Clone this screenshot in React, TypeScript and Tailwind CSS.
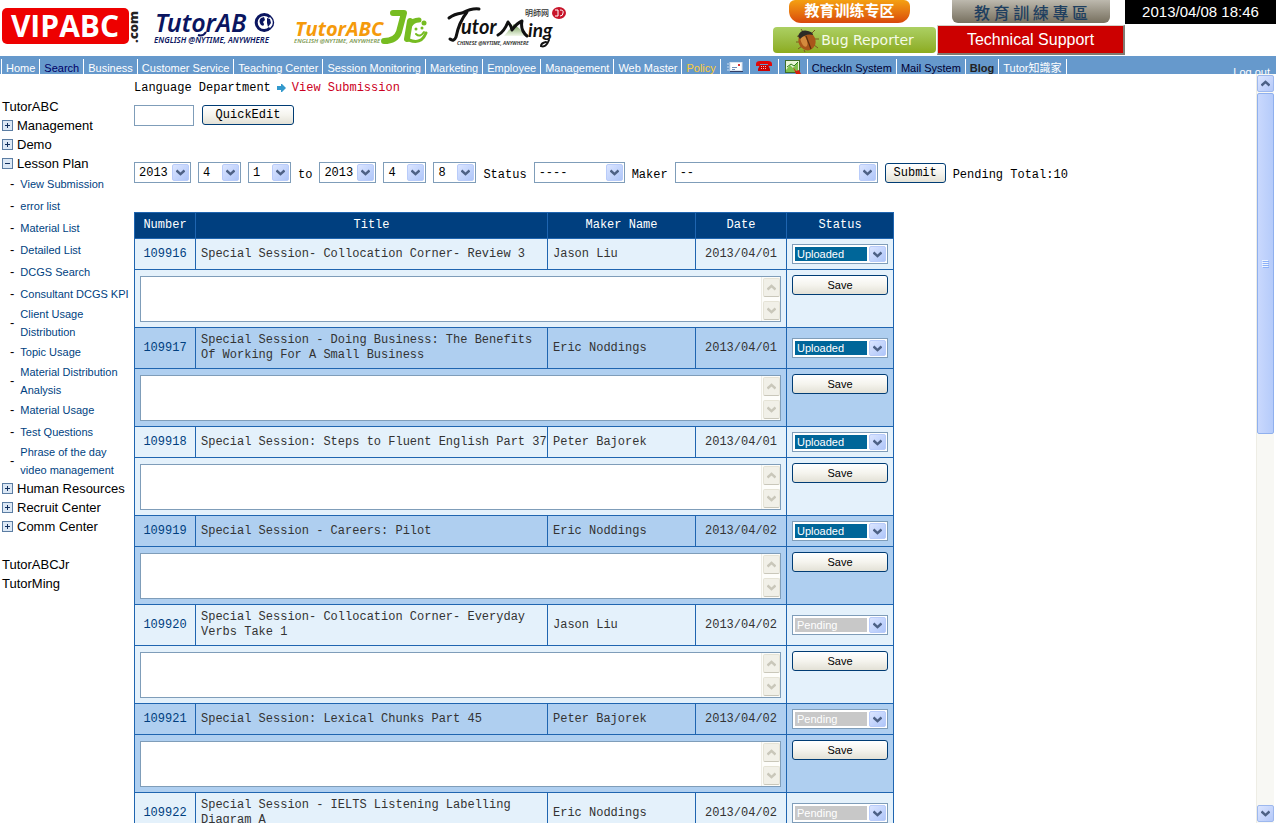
import React from "react";

const mono = "font-['Liberation_Mono','Noto_Sans_CJK_TC',monospace]";

type NavItem = { label: string; tone: string };

const NAV_LEFT: NavItem[] = [
  { label: "Home", tone: "text-white" },
  { label: "Search", tone: "text-[#000066]" },
  { label: "Business", tone: "text-white" },
  { label: "Customer Service", tone: "text-white" },
  { label: "Teaching Center", tone: "text-white" },
  { label: "Session Monitoring", tone: "text-white" },
  { label: "Marketing", tone: "text-white" },
  { label: "Employee", tone: "text-white" },
  { label: "Management", tone: "text-white" },
  { label: "Web Master", tone: "text-white" },
  { label: "Policy", tone: "text-[#ffcc33]" },
];

const NAV_RIGHT: NavItem[] = [
  { label: "CheckIn System", tone: "text-[#000033]" },
  { label: "Mail System", tone: "text-[#000033]" },
  { label: "Blog", tone: "text-[#222222] font-bold" },
  { label: "Tutor知識家", tone: "text-white" },
];

const LESSON_ITEMS = [
  "View Submission",
  "error list",
  "Material List",
  "Detailed List",
  "DCGS Search",
  "Consultant DCGS KPI",
  "Client Usage Distribution",
  "Topic Usage",
  "Material Distribution Analysis",
  "Material Usage",
  "Test Questions",
  "Phrase of the day video management",
];

type Row = { id: number; title: string; maker: string; date: string; status: "Uploaded" | "Pending" };

const ROWS: Row[] = [
  { id: 109916, title: "Special Session- Collocation Corner- Review 3", maker: "Jason Liu", date: "2013/04/01", status: "Uploaded" },
  { id: 109917, title: "Special Session - Doing Business: The Benefits Of Working For A Small Business", maker: "Eric Noddings", date: "2013/04/01", status: "Uploaded" },
  { id: 109918, title: "Special Session: Steps to Fluent English Part 37", maker: "Peter Bajorek", date: "2013/04/01", status: "Uploaded" },
  { id: 109919, title: "Special Session - Careers: Pilot", maker: "Eric Noddings", date: "2013/04/02", status: "Uploaded" },
  { id: 109920, title: "Special Session- Collocation Corner- Everyday Verbs Take 1", maker: "Jason Liu", date: "2013/04/02", status: "Pending" },
  { id: 109921, title: "Special Session: Lexical Chunks Part 45", maker: "Peter Bajorek", date: "2013/04/02", status: "Pending" },
  { id: 109922, title: "Special Session - IELTS Listening Labelling Diagram A", maker: "Eric Noddings", date: "2013/04/02", status: "Pending" },
];

function Chevron({ up = false, color }: { up?: boolean; color: string }) {
  return (
    <svg width="9" height="7" viewBox="0 0 9 7" aria-hidden="true">
      <path d={up ? "M0.5 5.5 L4.5 1.8 L8.5 5.5" : "M0.5 1.5 L4.5 5.2 L8.5 1.5"} fill="none" stroke={color} strokeWidth="2.4" />
    </svg>
  );
}

function DropArrow() {
  return (
    <span className="pointer-events-none absolute inset-y-px right-px flex w-[17px] items-center justify-center rounded-xs border border-[#b9ccfa] bg-linear-to-br from-[#dbe5ff] to-[#afc6f9]">
      <Chevron color="#4d6185" />
    </span>
  );
}

function Drop({ label, options, value, width }: { label: string; options: string[]; value: string; width: string }) {
  return (
    <span className={`relative block h-[21px] border border-[#7f9db9] bg-white ${width}`}>
      <select aria-label={label} defaultValue={value} className="block h-full w-full appearance-none bg-transparent pl-1 pr-5 text-xs leading-4 text-black outline-none">
        {options.map((o) => (
          <option key={o}>{o}</option>
        ))}
      </select>
      <DropArrow />
    </span>
  );
}

function StatusDrop({ status, id }: { status: "Uploaded" | "Pending"; id: number }) {
  const tone = status === "Uploaded" ? "bg-[#006699] text-white" : "bg-[#c8c8c8] text-white";
  return (
    <span className="relative block h-5 border border-[#7f9db9] bg-white">
      <select
        aria-label={`Status of ${id}`}
        defaultValue={status}
        className={`block h-full w-full appearance-none bg-clip-content py-0.5 pl-0.5 pr-5 indent-0.5 font-['Liberation_Sans',Arial,sans-serif] text-[11px] leading-[14px] outline-none ${tone}`}
      >
        <option>Pending</option>
        <option>Uploaded</option>
      </select>
      <DropArrow />
    </span>
  );
}

function XpButton({ children, className }: { children: React.ReactNode; className: string }) {
  return (
    <button
      type="button"
      className={`h-5 rounded-[3px] border border-[#003c74] bg-linear-to-b from-white via-[#f5f4ee] to-[#e3e1d6] text-center leading-4 text-black ${className}`}
    >
      {children}
    </button>
  );
}

function NoteField({ id }: { id: number }) {
  const cap = "flex h-[19px] w-[17px] items-center justify-center rounded-xs border border-[#e5e3d6] border-b-[#c9c7ba] bg-[#f1f0e8]";
  return (
    <div className="flex h-[46px] border border-[#7f9db9] bg-white">
      <textarea aria-label={`Note for ${id}`} className="block h-full min-w-0 flex-1 resize-none overflow-hidden p-0.5 text-xs outline-none" />
      <div aria-hidden="true" className="flex w-[19px] flex-col items-center justify-between border-l border-[#eeede5] bg-[#fdfdfa] py-px">
        <span className={cap}>
          <Chevron up color="#c9c7ba" />
        </span>
        <span className={cap}>
          <Chevron color="#c9c7ba" />
        </span>
      </div>
    </div>
  );
}

function VipLogo() {
  return (
    <svg width="142" height="56" viewBox="0 0 142 56" role="img" aria-label="VIPABC.com">
      <rect x="2" y="8" width="127" height="36" rx="5" fill="#ee0000" />
      <text x="65" y="37" textAnchor="middle" fontFamily="Open Sans, sans-serif" fontWeight="700" fontSize="30" fill="#fff">
        VIPABC
      </text>
      <text transform="translate(138 43) rotate(-90)" fontFamily="Open Sans, sans-serif" fontWeight="800" fontSize="13" fill="#222">
        .com
      </text>
    </svg>
  );
}

function TutorAbcLogo() {
  return (
    <svg width="140" height="56" viewBox="0 0 140 56" role="img" aria-label="TutorABC">
      <text x="13" y="32" fontFamily="Noto Sans, sans-serif" fontStyle="italic" fontWeight="600" fontSize="25" fill="#0a1560">
        TutorAB
      </text>
      <path d="M128 17 A8 8 0 1 0 128 28" fill="none" stroke="#0a1560" strokeWidth="3" />
      <path d="M124 15 A7.500 7.500 0 0 1 124 30" fill="none" stroke="#0a1560" strokeWidth="1.400" />
      <path d="M119 18 q-3 3 0 7 q3 2 3 -1 l-1 -2 l2 -2 l-1 -3 z M125 18 l3 1 l1 4 l-3 4 l-1 -4 z" fill="#0a1560" />
      <path d="M64 32 q-3 5 -8 3" fill="none" stroke="#0a1560" strokeWidth="2" />
      <text x="12" y="43" fontFamily="Noto Sans, sans-serif" fontStyle="italic" fontWeight="600" fontSize="8" fill="#0a1560">
        ENGLISH @NYTIME, ANYWHERE
      </text>
    </svg>
  );
}

function JrLogo() {
  return (
    <svg width="152" height="56" viewBox="0 0 152 56" role="img" aria-label="TutorABCJr">
      <text x="13" y="36" fontFamily="Open Sans, sans-serif" fontWeight="700" fontStyle="italic" fontSize="20" fill="#f59a0b">
        TutorABC
      </text>
      <g fill="none" stroke="#76bc21" strokeLinecap="round" strokeLinejoin="round">
        <path d="M111 13 H122 L117 32 Q114 41 102 41" strokeWidth="6" />
        <path d="M128 21 L125 39" strokeWidth="6" />
        <path d="M128 25 Q131 20 137 20" strokeWidth="5" />
        <path d="M127 40 Q139 45 144 33" strokeWidth="3" />
        <path d="M134 34 Q138 38 142 32" strokeWidth="2" />
      </g>
      <circle cx="134" cy="29" r="1.5" fill="#76bc21" />
      <circle cx="140" cy="28" r="1.5" fill="#76bc21" />
      <circle cx="142" cy="23" r="2.5" fill="#76bc21" />
      <text x="12" y="43" fontFamily="Noto Sans, sans-serif" fontStyle="italic" fontWeight="600" fontSize="6" fill="#7e9a54">
        ENGLISH @NYTIME, ANYWHERE
      </text>
    </svg>
  );
}

function MingLogo() {
  return (
    <svg width="142" height="56" viewBox="0 0 142 56" role="img" aria-label="TutorMing">
      <defs>
        <linearGradient id="hill" x1="0" y1="0" x2="0" y2="1">
          <stop offset="0" stopColor="#6f9a50" />
          <stop offset="1" stopColor="#f2f8ea" />
        </linearGradient>
      </defs>
      <path d="M70 36 L80 24 L94 36 Z" fill="url(#hill)" />
      <path d="M15 18 Q20 14 28 13 Q38 8 45 9 M33 12 Q25 22 22 37 Q20 42 16 39" fill="none" stroke="#111" strokeWidth="3" strokeLinecap="round" />
      <path d="M64 35 Q70 32 74 22 Q77 25 78 30 Q83 23 88 21 Q86 30 93 36" fill="none" stroke="#111" strokeWidth="3" strokeLinejoin="round" strokeLinecap="round" />
      <text x="27" y="34" fontFamily="Lato, sans-serif" fontStyle="italic" fontWeight="700" fontSize="20" fill="#111">
        utor
      </text>
      <text x="94" y="37" fontFamily="Lato, sans-serif" fontStyle="italic" fontWeight="700" fontSize="19" fill="#111">
        ing
      </text>
      <path d="M115 40 Q112 48 107 46 Q107 43 112 42" fill="none" stroke="#111" strokeWidth="2" strokeLinecap="round" />
      <text x="23" y="45" fontFamily="Noto Sans, sans-serif" fontStyle="italic" fontWeight="600" fontSize="5" fill="#222">
        CHINESE @NYTIME, ANYWHERE
      </text>
      <text x="91" y="16" fontFamily="Noto Sans CJK SC, sans-serif" fontWeight="500" fontSize="8" fill="#333">
        明師网
      </text>
      <ellipse cx="125" cy="13" rx="7" ry="6" fill="#c8142a" />
      <path d="M121 10 h3 v6 h-3 M126 10 q4 0 3 3 q0 3 -3 3" fill="none" stroke="#fff" strokeWidth="1" />
    </svg>
  );
}

function Bug() {
  return (
    <svg width="24" height="24" viewBox="0 0 24 24" aria-hidden="true">
      <path d="M2 8 l4 2 M1 14 h5 M3 21 l4 -3 M17 5 l3 -3 M20 11 h4 M19 17 l4 3 M8 4 l-2 -3 M9 22 l1 2" stroke="#7a5a20" strokeWidth="1" fill="none" />
      <ellipse cx="12" cy="13" rx="8.500" ry="9.500" fill="#a9561a" transform="rotate(-20 12 13)" />
      <ellipse cx="9" cy="13" rx="3" ry="6" fill="#d48a3d" transform="rotate(-20 9 13)" />
      <path d="M3 8 q3 -7 10 -5 q5 1 5 4 q-7 -2 -13 4 z" fill="#2e2b26" />
      <path d="M11 8 l5 13" stroke="#5a2c0c" strokeWidth="1.2" />
    </svg>
  );
}

function MailIcon() {
  return (
    <svg width="16" height="12" viewBox="0 0 16 12" aria-hidden="true">
      <path d="M0 3 h2 M0 6 h2 M0 9 h2" stroke="#c9dcf0" />
      <rect x="3" y="1.5" width="12" height="8" fill="#fff" stroke="#d8e2ee" />
      <path d="M5 6.5 h5 M5 8.5 h3" stroke="#6f8db8" />
      <rect x="11" y="3" width="2" height="2" fill="#d33" />
      <path d="M3 10.5 h13" stroke="#333f66" />
    </svg>
  );
}

function PhoneIcon() {
  return (
    <svg width="16" height="14" viewBox="0 0 16 14" aria-hidden="true">
      <path d="M0 4 q0 -3 4 -3 h8 q4 0 4 3 v2 h-4 v-2 h-8 v2 h-4 z" fill="#e00808" />
      <path d="M4 5 h8 l2 4 v2 h-12 v-2 z" fill="#cc0000" />
      <path d="M5 6.5 h6 M5 8.5 h6" stroke="#ffb3b3" strokeDasharray="1 1" />
    </svg>
  );
}

function ChartIcon() {
  return (
    <svg width="16" height="14" viewBox="0 0 16 14" aria-hidden="true">
      <rect x="0.5" y="0.5" width="14" height="12" fill="#e9f5d8" stroke="#3c6c2a" />
      <path d="M1 10 l4 -5 l3 3 l5 -6 v10 h-12 z" fill="#7fc04a" />
      <path d="M2 7 l4 -3 l3 2 l4 -4" stroke="#2c7a1a" fill="none" />
      <path d="M8 7 l3 4 l3 -1 l2 4 h-5 z" fill="#d42010" />
    </svg>
  );
}

function Toggle({ open }: { open: boolean }) {
  return (
    <svg width="11" height="11" viewBox="0 0 11 11" aria-hidden="true">
      <rect x="0.5" y="0.5" width="10" height="10" fill="#dce8f5" stroke="#5b7da3" />
      <path d={open ? "M3 5.5 h5" : "M3 5.5 h5 M5.5 3 v5"} stroke="#12305e" strokeWidth="1" />
    </svg>
  );
}

function Branch({ label, open = false }: { label: string; open?: boolean }) {
  return (
    <button type="button" aria-expanded={open} className="flex h-[19px] w-full items-center gap-1 whitespace-nowrap text-left">
      <Toggle open={open} />
      {label}
    </button>
  );
}

function Header() {
  return (
    <header className="flex h-14 shrink-0 justify-between">
      <div className="flex">
        <VipLogo />
        <TutorAbcLogo />
        <JrLogo />
        <MingLogo />
      </div>
      <div className="grid grid-cols-[164px_188px_151px] grid-rows-[24px_32px]">
        <a
          href="#training-cn"
          className="mr-[27px] flex h-[23px] w-[121px] items-center justify-center justify-self-end rounded-b-xl rounded-t-md bg-linear-to-b from-[#f4a012] to-[#d8480c] pb-1 font-['Noto_Sans_CJK_SC',sans-serif] text-[15px] font-bold leading-4 text-white"
        >
          教育训练专区
        </a>
        <a
          href="#training-tw"
          className="ml-[15px] flex h-[23px] w-[158px] items-center justify-center rounded-b-md bg-linear-to-b from-[#bdb9ae] to-[#77705f] font-['Noto_Sans_CJK_TC',sans-serif] text-base font-medium leading-4 text-[#1f3f5f]"
        >
          教 育 訓 練 專 區
        </a>
        <time className="flex items-center justify-center bg-black text-[15px] text-white">2013/04/08 18:46</time>
        <a
          href="#bug"
          className="mt-[3px] flex h-[26px] w-[163px] items-center justify-center gap-0.5 rounded-sm bg-linear-to-b from-[#acd062] to-[#8cab1c] font-['DejaVu_Sans',sans-serif] text-sm text-[#f5fbe6]"
        >
          <Bug />
          Bug Reporter
        </a>
        <a
          href="#support"
          className="mt-px flex h-[30px] items-center justify-center border border-b-2 border-r-2 border-[#d4d0c8] border-b-[#807c74] border-r-[#807c74] bg-[#cc0000] text-base text-white"
        >
          Technical Support
        </a>
      </div>
    </header>
  );
}

function NavLink({ children, tone }: { children: React.ReactNode; tone: string }) {
  return (
    <li className="flex h-[15px] items-end border-l border-white px-1 leading-[11px]">
      <a href="#nav" className={tone}>
        {children}
      </a>
    </li>
  );
}

function Nav() {
  return (
    <nav className="flex h-[18px] shrink-0 justify-between overflow-hidden bg-[#6699cc] pl-px text-[11px]">
      <ul className="flex items-end whitespace-nowrap">
        {NAV_LEFT.map((n) => (
          <NavLink key={n.label} tone={n.tone}>
            {n.label}
          </NavLink>
        ))}
        {[<MailIcon key="m" />, <PhoneIcon key="p" />, <ChartIcon key="c" />].map((icon, i) => (
          <li key={i} className="flex h-[15px] items-center border-l border-white px-1.5">
            <a href="#tool" aria-label={["Messages", "Phone", "Report"][i]}>
              {icon}
            </a>
          </li>
        ))}
        {NAV_RIGHT.map((n) => (
          <NavLink key={n.label} tone={n.tone}>
            {n.label}
          </NavLink>
        ))}
        <li aria-hidden="true" className="h-[15px] border-l border-white" />
      </ul>
      <a href="#logout" className="mr-1.5 mt-2.5 leading-[13px] text-white">
        Log out
      </a>
    </nav>
  );
}

function Sidebar() {
  return (
    <aside className="w-[134px] shrink-0 pl-0.5 pt-[23px] text-[13px] text-black">
      <a href="#abc" className="block leading-[19px]">
        TutorABC
      </a>
      <Branch label="Management" />
      <Branch label="Demo" />
      <Branch label="Lesson Plan" open />
      <ul>
        {LESSON_ITEMS.map((item) => (
          <li key={item} className="flex min-h-[22px] items-center gap-1.5 pl-2">
            <span aria-hidden="true">-</span>
            <a href="#lesson" className="w-[112px] text-[11px] leading-[18px] text-[#003f7f]">
              {item}
            </a>
          </li>
        ))}
      </ul>
      <Branch label="Human Resources" />
      <Branch label="Recruit Center" />
      <Branch label="Comm Center" />
      <a href="#jr" className="mt-[19px] block leading-[19px]">
        TutorABCJr
      </a>
      <a href="#ming" className="block leading-[19px]">
        TutorMing
      </a>
    </aside>
  );
}

function SubmissionTable() {
  const edge = "border border-[#1f65b0]";
  const cell = `${edge} px-[5px]`;
  return (
    <table className="mt-[29px] w-[760px] table-fixed border-collapse text-xs leading-[15px] text-[#333333]">
      <colgroup>
        <col className="w-[61px]" />
        <col className="w-[352px]" />
        <col className="w-[148px]" />
        <col className="w-[91px]" />
        <col className="w-[107px]" />
      </colgroup>
      <thead>
        <tr className="h-[26px] bg-[#003f7f] text-white">
          {["Number", "Title", "Maker Name", "Date", "Status"].map((h) => (
            <th key={h} scope="col" className={`${cell} font-normal`}>
              {h}
            </th>
          ))}
        </tr>
      </thead>
      <tbody>
        {ROWS.map((r, i) => {
          const bg = i % 2 === 0 ? "bg-[#e4f1fb]" : "bg-[#afcff0]";
          return (
            <React.Fragment key={r.id}>
              <tr className={`h-[31px] ${bg}`}>
                <td className={`${cell} text-center text-[#003f7f]`}>{r.id}</td>
                <td className={`${edge} py-[5px] pl-[5px]`}>{r.title}</td>
                <td className={cell}>{r.maker}</td>
                <td className={`${cell} text-center`}>{r.date}</td>
                <td className={cell}>
                  <StatusDrop status={r.status} id={r.id} />
                </td>
              </tr>
              <tr className={`h-[58px] ${bg}`}>
                <td colSpan={4} className={cell}>
                  <NoteField id={r.id} />
                </td>
                <td className={`${cell} pt-[5px] align-top`}>
                  <XpButton className="w-full font-['Liberation_Sans',Arial,sans-serif] text-[11px]">Save</XpButton>
                </td>
              </tr>
            </React.Fragment>
          );
        })}
      </tbody>
    </table>
  );
}

function Filters() {
  return (
    <form className="mt-9 flex items-center gap-[7px] whitespace-nowrap">
      <Drop label="From year" options={["2012", "2013"]} value="2013" width="w-[57px]" />
      <Drop label="From month" options={["3", "4"]} value="4" width="w-[43px]" />
      <Drop label="From day" options={["1", "8"]} value="1" width="w-[43px]" />
      <span className="pt-1">to</span>
      <Drop label="To year" options={["2012", "2013"]} value="2013" width="w-[57px]" />
      <Drop label="To month" options={["3", "4"]} value="4" width="w-[43px]" />
      <Drop label="To day" options={["1", "8"]} value="8" width="w-[43px]" />
      <span className="pt-1">Status</span>
      <Drop label="Status" options={["----", "Uploaded", "Pending"]} value="----" width="w-[91px]" />
      <span className="pt-1">Maker</span>
      <Drop label="Maker" options={["--", "Jason Liu", "Eric Noddings"]} value="--" width="w-[203px]" />
      <XpButton className="w-[61px]">Submit</XpButton>
      <span className="pt-1">Pending Total:10</span>
    </form>
  );
}

function PageScroll() {
  const cap = "flex h-[17px] w-[17px] shrink-0 items-center justify-center rounded-xs border border-[#9db8ee] bg-linear-to-br from-[#dbe5ff] to-[#b4c8f8]";
  return (
    <div aria-hidden="true" className="mr-0.5 flex w-[18px] shrink-0 flex-col items-center gap-px border-l border-[#eeede5] bg-[#f8f8f4] py-px">
      <span className={cap}>
        <Chevron up color="#4d6185" />
      </span>
      <div className="min-h-0 w-full flex-1">
        <div className="flex h-[48%] items-center justify-center rounded-xs border border-[#8fb0ee] bg-linear-to-r from-[#c9d8fd] to-[#b5cbfa]">
          <svg width="7" height="8" viewBox="0 0 7 8">
            <path d="M0 0.5 h6 M0 2.5 h6 M0 4.5 h6 M0 6.5 h6" stroke="#eef4fe" />
            <path d="M1 1.5 h6 M1 3.5 h6 M1 5.5 h6 M1 7.5 h6" stroke="#8cb0f8" />
          </svg>
        </div>
      </div>
      <span className={cap}>
        <Chevron color="#4d6185" />
      </span>
    </div>
  );
}

export default function App() {
  return (
    <div className="flex h-screen flex-col overflow-hidden bg-white font-['Liberation_Sans','Noto_Sans_CJK_TC',Arial,sans-serif]">
      <Header />
      <Nav />
      <div className="flex min-h-0 flex-1">
        <Sidebar />
        <main className={`min-w-0 flex-1 overflow-hidden text-xs leading-4 text-black ${mono}`}>
          <div className="flex items-center gap-1.5 pt-1.5">
            <span>Language Department</span>
            <svg width="9" height="8" viewBox="0 0 9 8" aria-hidden="true">
              <path d="M0 2 h4 v-2 h1 l4 4 l-4 4 h-1 v-2 h-4 z" fill="#3399cc" />
            </svg>
            <span className="text-[#cc0022]">View Submission</span>
          </div>
          <div className="mt-[9px] flex gap-2">
            <input aria-label="Submission number" className="h-[21px] w-[60px] border border-[#7f9db9] px-1 outline-none" />
            <XpButton className="w-[92px]">QuickEdit</XpButton>
          </div>
          <Filters />
          <SubmissionTable />
        </main>
        <PageScroll />
      </div>
    </div>
  );
}
